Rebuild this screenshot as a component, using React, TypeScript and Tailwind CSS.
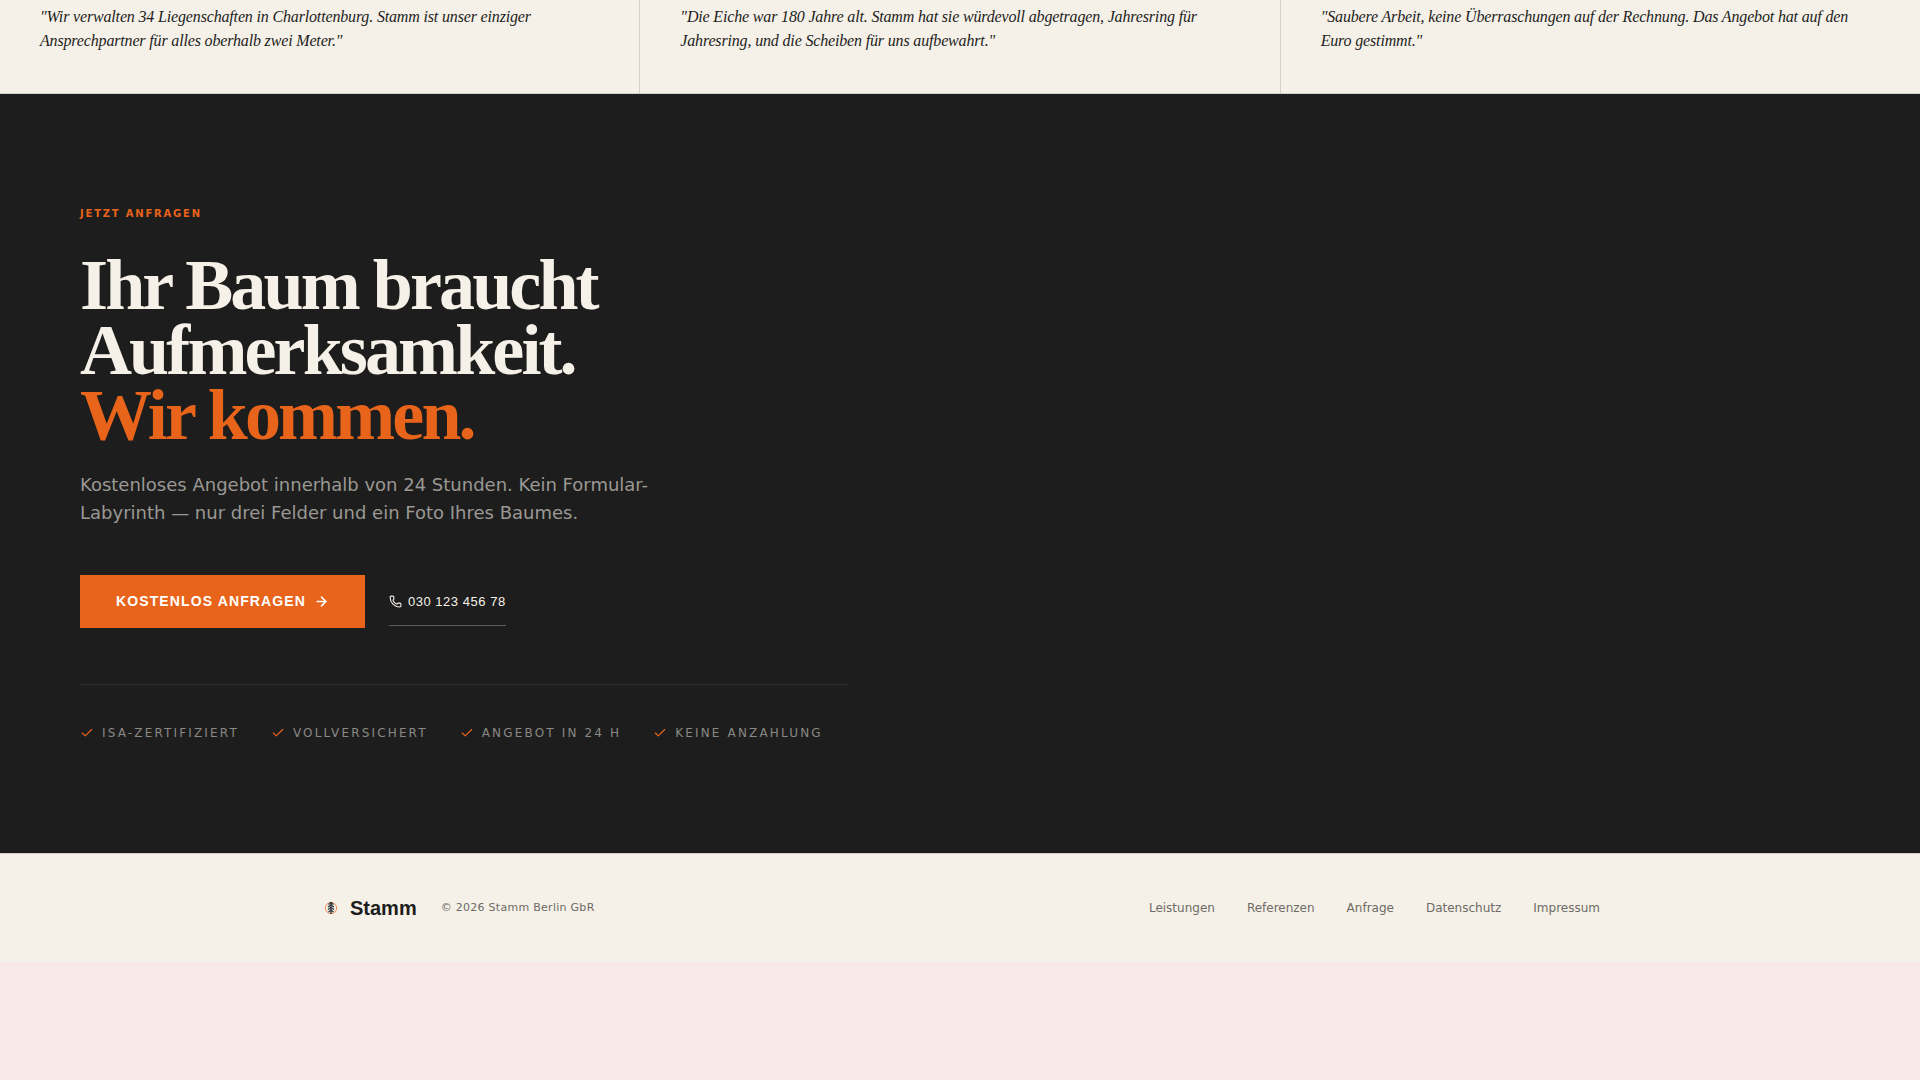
import { ArrowRight, Check, Phone } from 'lucide-react';

const QUOTES = [
  '"Wir verwalten 34 Liegenschaften in Charlottenburg. Stamm ist unser einziger Ansprechpartner für alles oberhalb zwei Meter."',
  '"Die Eiche war 180 Jahre alt. Stamm hat sie würdevoll abgetragen, Jahresring für Jahresring, und die Scheiben für uns aufbewahrt."',
  '"Saubere Arbeit, keine Überraschungen auf der Rechnung. Das Angebot hat auf den Euro gestimmt."',
];

const TRUST = ['ISA-zertifiziert', 'Vollversichert', 'Angebot in 24 h', 'Keine Anzahlung'];

const LINKS = ['Leistungen', 'Referenzen', 'Anfrage', 'Datenschutz', 'Impressum'];

function Logo() {
  return (
    <svg viewBox="0 0 22 22" className="size-[22px]" fill="none" aria-hidden="true">
      <circle cx="11" cy="11" r="5.6" stroke="#e8641a" strokeOpacity="0.7" />
      <path d="M11 5v12" stroke="#1d1d1d" strokeWidth="1.2" />
      <path
        d="M8.5 7.5 11 5.5l2.5 2M8 10l3-2 3 2M8 12.5l3-2 3 2M8.5 15l2.5-2 2.5 2"
        stroke="#26323a"
        strokeWidth="1.2"
      />
    </svg>
  );
}

function Quotes() {
  return (
    <section className="grid grid-cols-3 gap-px border-b border-[#d4d0c8] bg-[#d4d0c8]">
      {QUOTES.map((quote) => (
        <blockquote
          key={quote}
          className="bg-[#f5f1e8] px-10 pt-[5px] pb-10 font-['Liberation_Serif',serif] text-base tracking-[-0.01em] italic"
        >
          {quote}
        </blockquote>
      ))}
    </section>
  );
}

function Cta() {
  return (
    <section className="bg-[#1d1d1d] px-20 py-28">
      <div className="max-w-3xl">
        <p className="mb-8 text-[10px] leading-[15px] font-bold tracking-[0.18em] text-[#e8641a] uppercase">
          Jetzt anfragen
        </p>
        <h2 className="mb-6 font-['Liberation_Serif',serif] text-7xl leading-[0.9] font-bold tracking-[-0.04em] text-[#f5f1e8]">
          Ihr Baum braucht
          <br />
          Aufmerksamkeit.
          <br />
          <span className="text-[#e8641a]">Wir kommen.</span>
        </h2>
        <p className="mb-12 max-w-[580px] text-lg leading-7 text-[#9a9894]">
          Kostenloses Angebot innerhalb von 24 Stunden. Kein Formular-Labyrinth — nur drei Felder und ein Foto Ihres
          Baumes.
        </p>
        <div className="mb-14 flex items-center gap-6 font-['Liberation_Sans',sans-serif]">
          <button
            type="button"
            className="flex items-center gap-2 bg-[#e8641a] px-9 py-4 text-sm leading-[21px] font-bold tracking-[0.08em] text-white uppercase"
          >
            Kostenlos anfragen
            <ArrowRight size={15} strokeWidth={2.5} />
          </button>
          <a
            href="tel:+4903012345678"
            className="flex h-12 items-center gap-1.5 border-b border-[#5c5c5c] text-[13px] tracking-[0.04em] text-[#f5f1e8]"
          >
            <Phone size={13} />
            030 123 456 78
          </a>
        </div>
        <ul className="flex flex-wrap gap-x-8 gap-y-3 border-t border-[#303030] pt-10">
          {TRUST.map((item) => (
            <li
              key={item}
              className="flex items-center gap-2 text-xs leading-4 tracking-[0.18em] text-[#8a8884] uppercase"
            >
              <Check size={14} className="text-[#e8641a]" />
              {item}
            </li>
          ))}
        </ul>
      </div>
    </section>
  );
}

function Footer() {
  return (
    <footer className="border-t border-[#d4d0c8] py-10">
      <div className="mx-auto flex max-w-7xl items-center justify-between">
        <div className="flex items-center gap-6">
          <a
            href="#top"
            className="flex items-center gap-2 font-['Liberation_Sans',sans-serif] text-xl font-bold"
          >
            <Logo />
            Stamm
          </a>
          <span className="text-[11px] tracking-wide text-[#6e6b66]">© 2026 Stamm Berlin GbR</span>
        </div>
        <nav className="flex gap-8 text-xs text-[#6e6b66]">
          {LINKS.map((link) => (
            <a key={link} href={`#${link.toLowerCase()}`}>
              {link}
            </a>
          ))}
        </nav>
      </div>
    </footer>
  );
}

export default function App() {
  return (
    <div className="min-h-screen bg-[#f8e8e7] font-['DejaVu_Sans',sans-serif] text-[#1d1d1d]">
      <div className="bg-[#f5f1e8]">
        <Quotes />
        <Cta />
        <Footer />
      </div>
    </div>
  );
}
